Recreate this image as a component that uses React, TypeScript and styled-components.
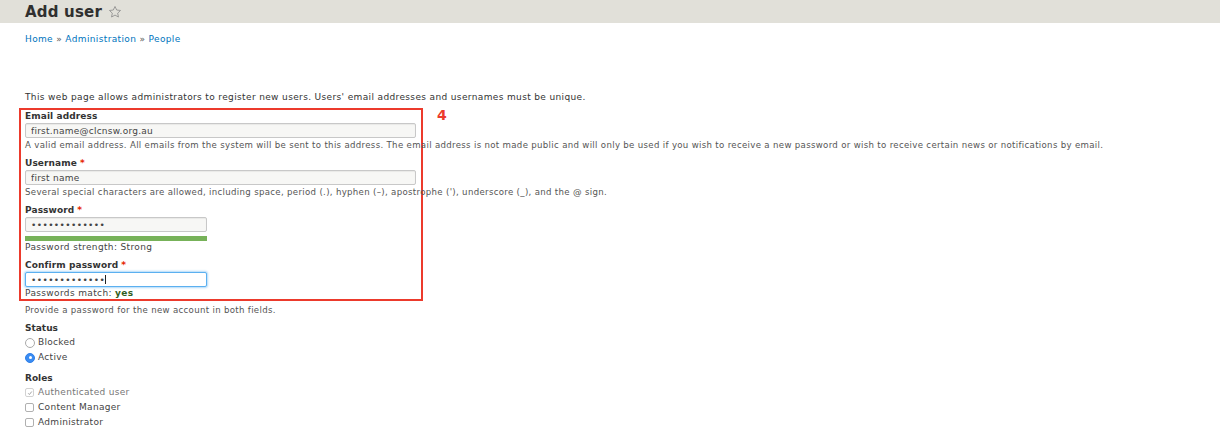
import styled, { createGlobalStyle } from "styled-components";

const GlobalStyle = createGlobalStyle`
  body {
    margin: 0;
    background: #fff;
    font-family: "DejaVu Sans", "Liberation Sans", sans-serif;
    color: #333;
  }
`;

const Header = styled.header`
  height: 23px;
  background: #e1e0d9;
  display: flex;
  align-items: center;
  padding-left: 25px;
  gap: 6px;
`;

const Title = styled.h1`
  margin: 0;
  font-size: 15px;
  font-weight: bold;
  color: #2f2f2f;
  letter-spacing: 0.2px;
`;

const Page = styled.main`
  padding: 0 25px;
`;

const Breadcrumb = styled.nav`
  margin-top: 10px;
  font-size: 9px;
  line-height: 12px;
  letter-spacing: 0.36px;
  color: #555;
  a {
    color: #0074bd;
    text-decoration: none;
  }
`;

const Intro = styled.p`
  margin: 46px 0 0;
  font-size: 9px;
  line-height: 12px;
  letter-spacing: 0.36px;
  color: #333;
`;

const Highlight = styled.div`
  position: relative;
  margin: 5px 0 0 -6px;
  width: 404px;
  border: 2px solid #ec3a2c;
  padding: 0 0 0 4px;
  box-sizing: border-box;
  white-space: nowrap;
`;

const StepNumber = styled.span`
  position: absolute;
  left: 416px;
  top: -2px;
  color: #ec3a2c;
  font-weight: bold;
  font-size: 14px;
  line-height: 14px;
`;

const Field = styled.div<{ $first?: boolean }>`
  margin-top: ${(p) => (p.$first ? "0" : "6px")};
`;

const Label = styled.label`
  display: block;
  font-size: 9px;
  font-weight: bold;
  line-height: 12px;
  color: #333;
  letter-spacing: 0.1px;
`;

const Required = styled.span`
  color: #e62600;
  margin-left: 3px;
`;

const InputWrap = styled.div`
  position: relative;
  margin-top: 1px;
`;

const TextInput = styled.input<{ $width: number; $focus?: boolean }>`
  display: block;
  box-sizing: border-box;
  width: ${(p) => p.$width}px;
  height: 15px;
  padding: 0 5px;
  font-family: "DejaVu Sans", sans-serif;
  font-size: 9px;
  color: #444;
  background: ${(p) => (p.$focus ? "#fff" : "#f7f7f5")};
  border: 1px solid ${(p) => (p.$focus ? "#5bb0f0" : "#c8c8c8")};
  border-radius: 2px;
  box-shadow: ${(p) =>
    p.$focus ? "0 0 2px 1px rgba(80, 170, 240, 0.45)" : "inset 0 1px 1px rgba(0,0,0,0.06)"};
  outline: none;
  letter-spacing: ${(p) => (p.type === "password" ? "0.4px" : "0.25px")};
`;

const Caret = styled.span`
  position: absolute;
  left: 80px;
  top: 3px;
  width: 1px;
  height: 9px;
  background: #222;
`;

const Description = styled.div<{ $gap?: number }>`
  margin-top: ${(p) => p.$gap ?? 2}px;
  font-size: 8.6px;
  line-height: 11px;
  letter-spacing: 0.32px;
  color: #555;
`;

const Message = styled.div`
  margin-top: 1px;
  font-size: 9px;
  line-height: 11px;
  letter-spacing: 0.36px;
  color: #444;
`;

const StrengthBar = styled.div`
  margin-top: 4px;
  width: 182px;
  height: 5px;
  background: #77b259;
`;

const Yes = styled.span`
  color: #325e1c;
  font-weight: bold;
`;

const GroupLabel = styled.div<{ $gap: number }>`
  margin-top: ${(p) => p.$gap}px;
  font-size: 9px;
  font-weight: bold;
  line-height: 12px;
  color: #333;
`;

const OptionList = styled.div`
  margin-top: 3px;
  display: flex;
  flex-direction: column;
  gap: 4px;
`;

const Option = styled.div<{ $disabled?: boolean }>`
  display: flex;
  align-items: center;
  gap: 3px;
  font-size: 9px;
  line-height: 11px;
  letter-spacing: 0.3px;
  color: ${(p) => (p.$disabled ? "#777" : "#444")};
`;

const Radio = styled.span<{ $checked?: boolean }>`
  width: 10px;
  height: 10px;
  border-radius: 50%;
  box-sizing: border-box;
  border: 1px solid ${(p) => (p.$checked ? "#2f7fe8" : "#aaa")};
  background: ${(p) => (p.$checked ? "#3a8cf2" : "#fff")};
  display: flex;
  align-items: center;
  justify-content: center;
  &::after {
    content: "";
    width: 3px;
    height: 3px;
    border-radius: 50%;
    background: ${(p) => (p.$checked ? "#fff" : "transparent")};
  }
`;

const Checkbox = styled.span<{ $disabled?: boolean }>`
  width: 9px;
  height: 9px;
  margin-right: 1px;
  border-radius: 2px;
  box-sizing: border-box;
  border: 1px solid ${(p) => (p.$disabled ? "#d2d2d2" : "#b0b0b0")};
  background: #fff;
  display: flex;
  align-items: center;
  justify-content: center;
`;

function Star() {
  return (
    <svg width="14" height="14" viewBox="0 0 24 24" fill="none" stroke="#8a8a8a" strokeWidth="1.4">
      <path d="M12 2.5l2.9 6.1 6.6.8-4.9 4.6 1.3 6.6L12 17.3l-5.9 3.3 1.3-6.6-4.9-4.6 6.6-.8z" />
    </svg>
  );
}

export default function App() {
  return (
    <>
      <GlobalStyle />
      <Header>
        <Title>Add user</Title>
        <Star />
      </Header>
      <Page>
        <Breadcrumb>
          <a href="#">Home</a> » <a href="#">Administration</a> » <a href="#">People</a>
        </Breadcrumb>
        <Intro>
          This web page allows administrators to register new users. Users' email addresses and
          usernames must be unique.
        </Intro>

        <Highlight>
          <StepNumber>4</StepNumber>
          <Field $first>
            <Label>Email address</Label>
            <InputWrap>
              <TextInput $width={391} readOnly value="first.name@clcnsw.org.au" />
            </InputWrap>
            <Description $gap={2}>
              A valid email address. All emails from the system will be sent to this address. The
              email address is not made public and will only be used if you wish to receive a new
              password or wish to receive certain news or notifications by email.
            </Description>
          </Field>
          <Field>
            <Label>
              Username<Required>*</Required>
            </Label>
            <InputWrap>
              <TextInput $width={391} readOnly value="first name" />
            </InputWrap>
            <Description $gap={2}>
              Several special characters are allowed, including space, period (.), hyphen (–),
              apostrophe ('), underscore (_), and the @ sign.
            </Description>
          </Field>
          <Field>
            <Label>
              Password<Required>*</Required>
            </Label>
            <InputWrap>
              <TextInput $width={182} type="password" readOnly value="abcdefghijklm" />
            </InputWrap>
            <StrengthBar />
            <Message>Password strength: Strong</Message>
          </Field>
          <Field>
            <Label>
              Confirm password<Required>*</Required>
            </Label>
            <InputWrap>
              <TextInput $width={182} $focus type="password" readOnly value="abcdefghijklm" />
              <Caret />
            </InputWrap>
            <Message>
              Passwords match: <Yes>yes</Yes>
            </Message>
          </Field>
        </Highlight>

        <Description $gap={4}>Provide a password for the new account in both fields.</Description>

        <GroupLabel $gap={6}>Status</GroupLabel>
        <OptionList>
          <Option>
            <Radio />
            Blocked
          </Option>
          <Option>
            <Radio $checked />
            Active
          </Option>
        </OptionList>

        <GroupLabel $gap={9}>Roles</GroupLabel>
        <OptionList>
          <Option $disabled>
            <Checkbox $disabled>
              <svg width="6" height="6" viewBox="0 0 10 10" fill="none" stroke="#999" strokeWidth="1.5">
                <path d="M2 5.5l2 2 4-5" />
              </svg>
            </Checkbox>
            Authenticated user
          </Option>
          <Option>
            <Checkbox />
            Content Manager
          </Option>
          <Option>
            <Checkbox />
            Administrator
          </Option>
        </OptionList>
      </Page>
    </>
  );
}
